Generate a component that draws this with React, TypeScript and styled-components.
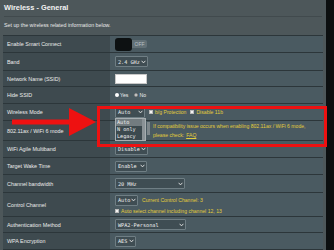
import React from "react";
import styled, { createGlobalStyle } from "styled-components";

const GlobalStyle = createGlobalStyle`
html, body {
  margin: 0;
  padding: 0;
  background: #4d575a;
  overflow: hidden;
}
* { box-sizing: border-box; }
`;

const Page = styled.div`
display: flex;
width: 334px;
height: 250px;
position: relative;
font-family: "Liberation Sans", Arial, sans-serif;
`;

const Main = styled.div`
flex: 1;
padding: 0 3px;
`;

const ScrollStrip = styled.div`
width: 8px;
background: #0c0f10;
`;

const Header = styled.div`
padding: 0 1px;
height: 35px;
`;

const Title = styled.div`
font-size: 7.4px;
font-weight: bold;
color: #f2f2f2;
height: 17px;
line-height: 15px;
border-bottom: 1px solid #414a4d;
`;

const SubTitle = styled.div`
font-size: 5.3px;
color: #e8e8e8;
line-height: 15px;
padding-top: 1px;
`;

const Table = styled.div`
border-top: 1px solid #2c363a;
width: 320px;
`;

const Row = styled.div<{ $h: number }>`
display: grid;
grid-template-columns: 107px 1fr;
height: ${(p) => p.$h}px;
border-bottom: 1px solid #2c363a;
`;

const Label = styled.div`
background: #3e4a4f;
color: #ebebeb;
font-size: 5.4px;
display: flex;
align-items: center;
padding-left: 4px;
white-space: nowrap;
`;

const Value = styled.div<{ $column?: boolean }>`
background: #4a5a61;
display: flex;
flex-direction: ${(p) => (p.$column ? "column" : "row")};
align-items: ${(p) => (p.$column ? "flex-start" : "center")};
justify-content: ${(p) => (p.$column ? "center" : "flex-start")};
gap: ${(p) => (p.$column ? "2px" : "4px")};
padding-left: 5px;
position: relative;
white-space: nowrap;
`;

const Line = styled.div`
display: flex;
align-items: center;
gap: 4px;
`;

const SelectBox = styled.div<{ $w: number }>`
width: ${(p) => p.$w}px;
height: 11px;
background: #3f4d53;
border: 1px solid #6f7e84;
border-radius: 1px;
display: flex;
align-items: center;
justify-content: space-between;
padding: 0 1px 0 2px;
color: #f0f0f0;
font-family: "DejaVu Sans Mono", monospace;
font-size: 5.2px;
white-space: nowrap;
overflow: hidden;
flex-shrink: 0;
`;

const Chevron = () => (
  <svg width="5" height="4" viewBox="0 0 5 4" style={{ flexShrink: 0 }}>
    <path d="M0.6 0.8 L2.5 2.9 L4.4 0.8" fill="none" stroke="#e8e8e8" strokeWidth="0.9" />
  </svg>
);

const Select = ({ w, children }: { w: number; children: React.ReactNode }) => (
  <SelectBox $w={w}>
    <span>{children}</span>
    <Chevron />
  </SelectBox>
);

const Toggle = styled.div`
display: flex;
align-items: center;
`;

const Knob = styled.div`
width: 17px;
height: 13px;
background: #0d1112;
border-radius: 3px;
`;

const OffPill = styled.div`
width: 15px;
height: 8px;
background: #627076;
border-radius: 0 2px 2px 0;
color: #b9c1c4;
font-size: 5px;
display: flex;
align-items: center;
justify-content: center;
`;

const TextInput = styled.div`
width: 32px;
height: 10px;
background: #ffffff;
border: 1px solid #c9c9c9;
`;

const Radio = styled.span<{ $on?: boolean }>`
display: inline-block;
width: 4px;
height: 4px;
border-radius: 50%;
background: ${(p) => (p.$on ? "#ffffff" : "#d9d9d9")};
border: ${(p) => (p.$on ? "none" : "1px solid #888")};
margin-right: 1px;
`;

const Option = styled.span`
display: flex;
align-items: center;
color: #ededed;
font-size: 5.2px;
margin-right: 2px;
`;

const Check = styled.span`
display: inline-block;
width: 4px;
height: 4px;
background: #f4f4f4;
border: 1px solid #bbb;
margin-right: 2px;
`;

const Note = styled.span<{ $indent?: number }>`
color: #e3cd3b;
font-size: 5.1px;
display: flex;
align-items: center;
line-height: 7px;
padding-left: ${(p) => p.$indent ?? 0}px;
`;

const Faq = styled.span`
text-decoration: underline;
margin-left: 2px;
`;

const ListBox = styled.div`
position: absolute;
left: 5px;
top: -3px;
width: 31px;
height: 23px;
background: #3c494e;
border: 1px solid #a7aeb1;
display: flex;
`;

const ListItems = styled.div`
flex: 1;
display: flex;
flex-direction: column;
`;

const ListItem = styled.div<{ $active?: boolean }>`
height: 7px;
line-height: 7px;
padding-left: 1px;
font-family: "DejaVu Sans Mono", monospace;
font-size: 5.2px;
color: #f2f2f2;
background: ${(p) => (p.$active ? "#737c80" : "transparent")};
`;

const ListScroll = styled.div`
width: 3px;
background: #8a9296;
`;

const SideStub = styled.div`
position: absolute;
left: 37px;
top: 1px;
width: 3px;
height: 13px;
background: #7e878b;
`;

const Annotation = styled.svg`
position: absolute;
left: 0;
top: 0;
pointer-events: none;
`;

export default function App() {
  return (
    <>
      <GlobalStyle />
      <Page>
        <Main>
          <Header>
            <Title>Wireless - General</Title>
            <SubTitle>Set up the wireless related information below.</SubTitle>
          </Header>
          <Table>
            <Row $h={17}>
              <Label>Enable Smart Connect</Label>
              <Value>
                <Toggle>
                  <Knob />
                  <OffPill>OFF</OffPill>
                </Toggle>
              </Value>
            </Row>
            <Row $h={18}>
              <Label>Band</Label>
              <Value>
                <Select w={33}>2.4 GHz</Select>
              </Value>
            </Row>
            <Row $h={16}>
              <Label>Network Name (SSID)</Label>
              <Value>
                <TextInput />
              </Value>
            </Row>
            <Row $h={17}>
              <Label>Hide SSID</Label>
              <Value>
                <Option><Radio $on />Yes</Option>
                <Option><Radio />No</Option>
              </Value>
            </Row>
            <Row $h={17}>
              <Label>Wireless Mode</Label>
              <Value>
                <Select w={30}>Auto</Select>
                <Note><Check />b/g Protection</Note>
                <Note><Check />Disable 11b</Note>
              </Value>
            </Row>
            <Row $h={20}>
              <Label>802.11ax / WiFi 6 mode</Label>
              <Value $column>
                <Note $indent={38}>If compatibility issue occurs when enabling 802.11ax / WiFi 6 mode,</Note>
                <Note $indent={38}>please check:<Faq>FAQ</Faq></Note>
                <ListBox>
                  <ListItems>
                    <ListItem $active>Auto</ListItem>
                    <ListItem>N only</ListItem>
                    <ListItem>Legacy</ListItem>
                  </ListItems>
                  <ListScroll />
                </ListBox>
                <SideStub />
              </Value>
            </Row>
            <Row $h={17}>
              <Label>WiFi Agile Multiband</Label>
              <Value>
                <Select w={33}>Disable</Select>
              </Value>
            </Row>
            <Row $h={17}>
              <Label>Target Wake Time</Label>
              <Value>
                <Select w={32}>Enable</Select>
              </Value>
            </Row>
            <Row $h={18}>
              <Label>Channel bandwidth</Label>
              <Value>
                <Select w={70}>20 MHz</Select>
              </Value>
            </Row>
            <Row $h={24}>
              <Label>Control Channel</Label>
              <Value $column>
                <Line>
                  <Select w={23}>Auto</Select>
                  <Note>Current Control Channel: 3</Note>
                </Line>
                <Note><Check />Auto select channel including channel 12, 13</Note>
              </Value>
            </Row>
            <Row $h={16}>
              <Label>Authentication Method</Label>
              <Value>
                <Select w={71}>WPA2-Personal</Select>
              </Value>
            </Row>
            <Row $h={17}>
              <Label>WPA Encryption</Label>
              <Value>
                <Select w={21}>AES</Select>
              </Value>
            </Row>
          </Table>
        </Main>
        <ScrollStrip />
        <Annotation width="334" height="250" viewBox="0 0 334 250">
          <rect x="98.5" y="107.5" width="227" height="38" fill="none" stroke="#ee1111" strokeWidth="3" />
          <path d="M12 119.5 H69 V108 L96 122 L69 136 V124.5 H12 Z" fill="#ee1111" />
        </Annotation>
      </Page>
    </>
  );
}
